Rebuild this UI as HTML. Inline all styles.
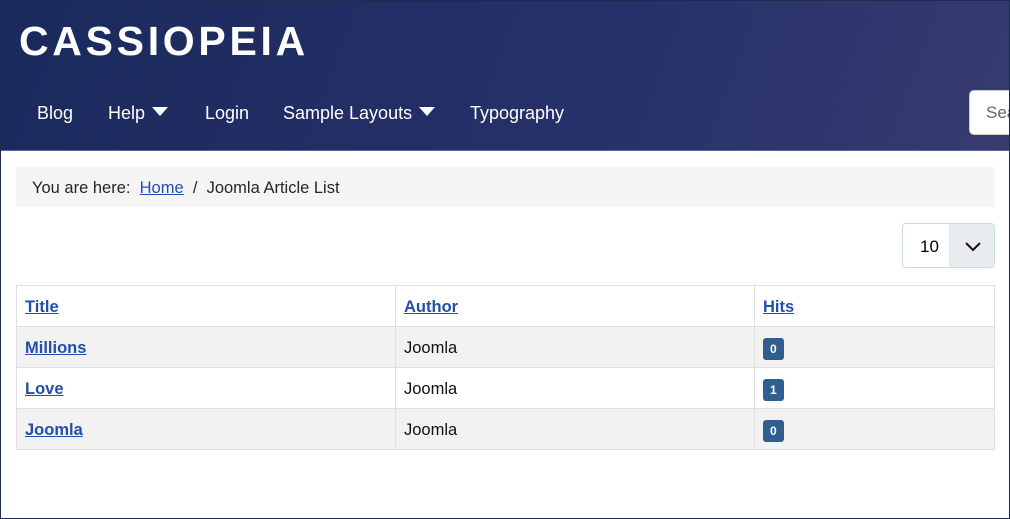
<!DOCTYPE html>
<html><head><meta charset="utf-8"><style>
*{box-sizing:border-box;margin:0;padding:0}
body{width:1010px;height:519px;overflow:hidden;font-family:"Liberation Sans",sans-serif;background:#fff;position:relative}
.frame{position:absolute;inset:0;border:1px solid #1e2a4f;pointer-events:none;z-index:5}
.hdr{position:absolute;left:0;top:0;width:1010px;height:151px;background:linear-gradient(110deg,#1a2a5c 0%,#27306a 60%,#363c70 100%);border-bottom:1px solid #5a6590}
.logo{position:absolute;left:19px;top:18px;color:#fff;font-size:41px;font-weight:bold;letter-spacing:3.7px}
.nav a{position:absolute;top:103px;color:#fff;font-size:18px;text-decoration:none}
.tri{display:inline-block;width:0;height:0;border-left:8px solid transparent;border-right:8px solid transparent;border-top:9px solid #fff;margin-left:7px;vertical-align:3px}
.search{position:absolute;left:969px;top:90px;width:60px;height:45px;background:#fff;border-radius:5px;border:1px solid #ccc;color:#666;font-size:17px;padding:12px 0 0 16px}
.bc{position:absolute;left:16px;top:167px;width:979px;height:40px;background:#f5f5f5;font-size:16.5px;color:#22262a;padding:12px 0 0 16px}
.bc a{color:#224faa;text-decoration:underline}
.sel{position:absolute;left:902px;top:223px;width:93px;height:45px;border:1px solid #cdd;border-radius:4px;overflow:hidden;font-size:17px}
.sel .v{position:absolute;left:17px;top:13px}
.sel .b{position:absolute;left:46px;top:0;width:47px;height:45px;background:#e9ecef}
table{position:absolute;left:16px;top:285px;width:979px;border-collapse:collapse;font-size:16.5px}
td{border:1px solid #dfdfdf;height:41px;padding:3px 8px 0;vertical-align:middle;color:#111}
tr:nth-child(even) td{background:#f2f2f2}
td a{color:#224faa;font-weight:bold;text-decoration:underline}
.bd{display:inline-block;background:#2f5f8e;color:#fff;font-size:12px;font-weight:bold;padding:4px 7px;border-radius:3px}
</style></head><body>
<div class="hdr">
<div class="logo">CASSIOPEIA</div>
<div class="nav">
<a style="left:37px">Blog</a>
<a style="left:108px">Help<span class="tri"></span></a>
<a style="left:205px">Login</a>
<a style="left:283px">Sample Layouts<span class="tri"></span></a>
<a style="left:470px">Typography</a>
</div>
<div class="search">Search</div>
</div>
<div class="bc">You are here:&nbsp; <a>Home</a> &nbsp;/&nbsp; Joomla Article List</div>
<div class="sel"><span class="v">10</span><div class="b"><svg width="47" height="45"><path d="M17 19 L24 26 L31 19" fill="none" stroke="#111" stroke-width="2"/></svg></div></div>
<table>
<tr><td style="width:379px;background:#fff"><a>Title</a></td><td style="width:359px;background:#fff"><a>Author</a></td><td style="background:#fff"><a>Hits</a></td></tr>
<tr><td><a>Millions</a></td><td>Joomla</td><td><span class="bd">0</span></td></tr>
<tr><td><a>Love</a></td><td>Joomla</td><td><span class="bd">1</span></td></tr>
<tr><td><a>Joomla</a></td><td>Joomla</td><td><span class="bd">0</span></td></tr>
</table>
<div class="frame"></div>
</body></html>
